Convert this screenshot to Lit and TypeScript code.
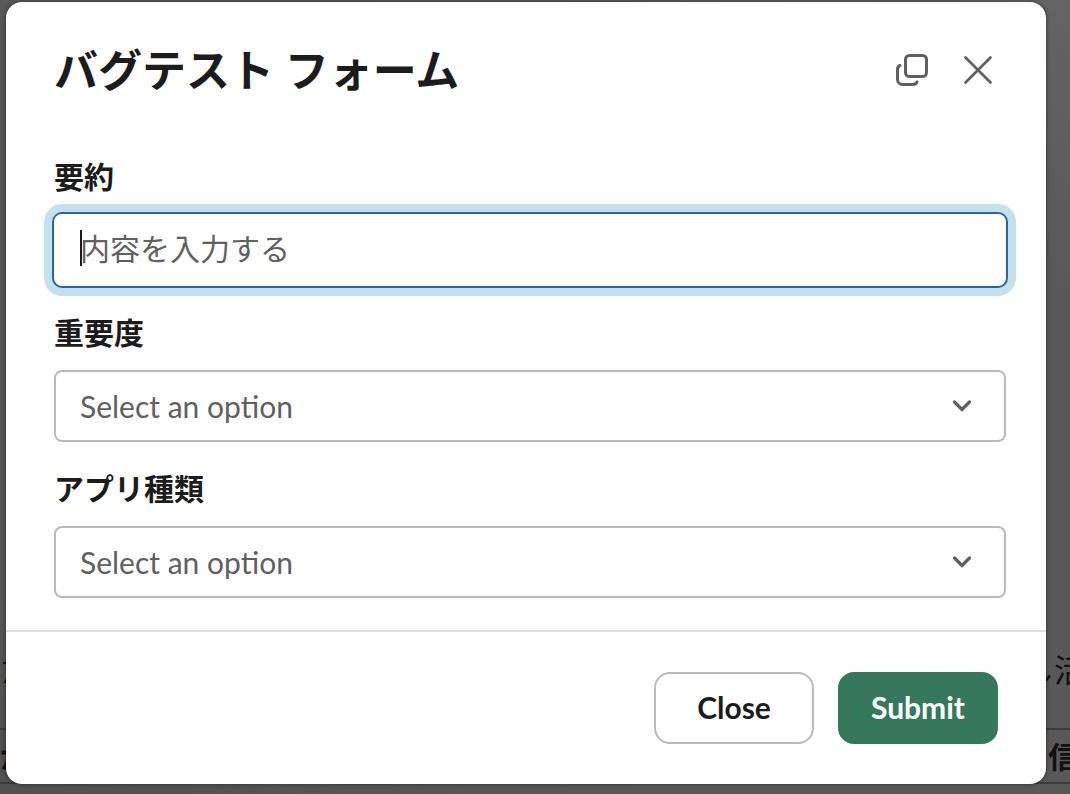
import { LitElement, html, css } from "lit";
import { customElement, property } from "lit/decorators.js";

const FONT = css`Lato, "Noto Sans CJK JP", sans-serif`;

@customElement("select-field")
class SelectField extends LitElement {
  @property() label = "";

  static styles = css`
    :host {
      display: block;
      font-family: ${FONT};
    }
    .label {
      display: block;
      margin-bottom: 16px;
      font-size: 30px;
      line-height: 44px;
      font-weight: 700;
      color: #1d1c1d;
    }
    .box {
      display: grid;
      align-items: center;
    }
    .control {
      grid-area: 1 / 1;
      box-sizing: border-box;
      width: 100%;
      height: 72px;
      padding: 0 64px 0 24px;
      border: 2px solid #bbbabb;
      border-radius: 8px;
      background: #fff;
      color: #616061;
      font: 30px/44px ${FONT};
      appearance: none;
    }
    .chevron {
      grid-area: 1 / 1;
      justify-self: end;
      margin-right: 32px;
      pointer-events: none;
    }
  `;

  render() {
    return html`
      <label class="label" for="control">${this.label}</label>
      <div class="box">
        <select class="control" id="control">
          <option>Select an option</option>
        </select>
        <svg class="chevron" width="24" height="24" viewBox="0 0 24 24" fill="none"
          stroke="#616061" stroke-width="3.2" stroke-linecap="round" stroke-linejoin="round">
          <path d="M4.5 8 12 15.5 19.5 8" />
        </svg>
      </div>
    `;
  }
}

@customElement("app-root")
class AppRoot extends LitElement {
  static styles = css`
    :host {
      display: block;
      font-family: ${FONT};
      color: #1d1c1d;
    }
    .stage {
      position: relative;
      box-sizing: border-box;
      min-height: 100vh;
      padding: 2px 24px 10px 6px;
      overflow: hidden;
      background: linear-gradient(200deg, #646464, #585858 25%, #585858 80%, #505050);
    }
    .behind {
      position: absolute;
      inset: auto 0 10px 0;
      color: #111;
      font-size: 32px;
      line-height: 56px;
    }
    .line {
      display: flex;
      justify-content: space-between;
      height: 86px;
      white-space: nowrap;
    }
    .line .end {
      margin-right: -16px;
    }
    .row {
      height: 52px;
      border-top: 2px solid #3c3c3c;
      border-bottom: 2px solid #3c3c3c;
      font-size: 30px;
      line-height: 52px;
      font-weight: 700;
    }
    .row .end {
      margin-right: -8px;
    }
    .dialog {
      position: relative;
      border-radius: 16px;
      background: #fff;
      box-shadow: 0 0 4px rgba(0, 0, 0, 0.5);
    }
    .header {
      display: flex;
      align-items: center;
      gap: 10px;
      padding: 36px 40px 0 48px;
    }
    .title {
      flex: 1;
      margin: 0;
      font-size: 44px;
      line-height: 64px;
      font-weight: 700;
    }
    .icon {
      display: grid;
      place-items: center;
      width: 56px;
      height: 56px;
      padding: 0;
      border: 0;
      border-radius: 8px;
      background: none;
      color: #616061;
    }
    .body {
      display: grid;
      gap: 24px;
      padding: 52px 40px 32px 48px;
    }
    .label {
      display: block;
      margin-bottom: 16px;
      font-size: 30px;
      line-height: 44px;
      font-weight: 700;
    }
    .entry {
      position: relative;
    }
    .input {
      display: block;
      box-sizing: border-box;
      width: 100%;
      height: 72px;
      padding: 0 26px 4px;
      border: 0;
      border-radius: 8px;
      outline: none;
      background: #fff;
      box-shadow: 0 0 0 2px #2b64a0, 0 0 0 10px #c4e1f0;
      caret-color: transparent;
      font: 30px/44px ${FONT};
      color: #1d1c1d;
    }
    .input::placeholder {
      color: #616061;
      opacity: 1;
    }
    .caret {
      position: absolute;
      left: 26px;
      top: 16px;
      width: 2px;
      height: 36px;
      background: #1d1c1d;
    }
    .footer {
      display: flex;
      justify-content: flex-end;
      gap: 24px;
      padding: 40px 48px;
      border-top: 2px solid #dddddd;
    }
    .button {
      box-sizing: border-box;
      width: 160px;
      height: 72px;
      padding: 0 0 2px;
      border: 2px solid #bbbabb;
      border-radius: 16px;
      background: #fff;
      color: #1d1c1d;
      font: 700 30px/44px ${FONT};
    }
    .primary {
      border-color: #35785b;
      background: #35785b;
      color: #fff;
    }
  `;

  render() {
    return html`
      <div class="stage">
        <div class="behind" aria-hidden="true">
          <div class="line"><span class="start">た</span><span class="end">し活</span></div>
          <div class="line row"><span class="start">が</span><span class="end">信</span></div>
        </div>
        <div class="dialog" role="dialog" aria-labelledby="title">
          <header class="header">
            <h1 class="title" id="title">バグテスト フォーム</h1>
            <button class="icon" aria-label="Open in new window">
              <svg width="32" height="32" viewBox="0 0 32 32" fill="none" stroke="currentColor"
                stroke-width="3" stroke-linecap="round">
                <rect x="9.5" y="1.5" width="21" height="21" rx="4" />
                <path d="M4 11.5C2.5 12 1.5 13.5 1.5 15.5V25.5a5 5 0 0 0 5 5H16c2.5 0 4.500-1 5-2.500" />
              </svg>
            </button>
            <button class="icon" aria-label="Dismiss">
              <svg width="32" height="32" viewBox="0 0 32 32" fill="none" stroke="currentColor"
                stroke-width="2.7" stroke-linecap="round">
                <path d="M3.500 3.500 28.500 28.500M28.500 3.500 3.500 28.500" />
              </svg>
            </button>
          </header>
          <main class="body">
            <div>
              <label class="label" for="summary">要約</label>
              <div class="entry">
                <input class="input" id="summary" type="text" placeholder="内容を入力する" />
                <span class="caret"></span>
              </div>
            </div>
            <select-field label="重要度"></select-field>
            <select-field label="アプリ種類"></select-field>
          </main>
          <footer class="footer">
            <button class="button">Close</button>
            <button class="button primary">Submit</button>
          </footer>
        </div>
      </div>
    `;
  }
}
